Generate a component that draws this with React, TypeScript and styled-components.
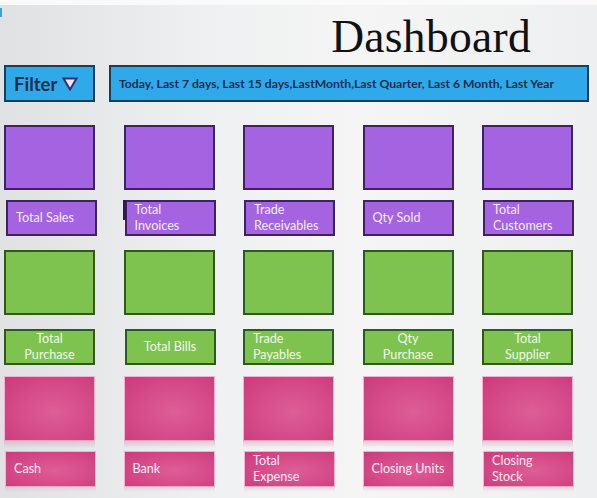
import styled, { createGlobalStyle, css } from "styled-components"

const GlobalStyle = createGlobalStyle`
  html, body {
    margin: 0;
    padding: 0;
  }
  body {
    font-family: Lato, "Open Sans", sans-serif;
  }
`

type Tone = "purple" | "green" | "pink"

const palette = {
  purple: { fill: "#a463e0", border: "#3d2361", text: "#f4ecfb" },
  green: { fill: "#7ec34f", border: "#2d5a1f", text: "#f1f8ea" },
  pink: { fill: "#d64787", border: "#f4b2cf", text: "#fdeaf3" },
}

const Page = styled.div`
  position: relative;
  width: 597px;
  height: 498px;
  overflow: hidden;
  box-sizing: border-box;
  border-top: 5px solid #fafafa;
  background: linear-gradient(90deg, #dfe1e3 0%, #eff0f1 35%, #f5f5f5 60%, #eeeff0 100%);
`

/* the little blue scrap at the top left */
const Scrap = styled.div`
  position: absolute;
  left: 0;
  top: 3px;
  width: 2px;
  height: 9px;
  background: #2fa6e6;
`

const TitleRow = styled.div`
  height: 60px;
  display: flex;
  justify-content: flex-end;
  padding-right: 66px;
`

const Title = styled.h1`
  margin: 9px 0 0;
  font-family: "Liberation Serif", "Times New Roman", serif;
  font-weight: 400;
  font-size: 45.5px;
  line-height: 45px;
  letter-spacing: 0.3px;
  color: #111;
`

const FilterRow = styled.div`
  display: flex;
  gap: 14px;
  padding-left: 4px;
  height: 37px;
`

const BlueBox = styled.div`
  box-sizing: border-box;
  height: 37px;
  background: #2fa9ea;
  border: 2px solid #1d3c5c;
  display: flex;
  align-items: center;
  color: #1d2f4d;
  font-weight: 700;
`

const FilterButton = styled(BlueBox)`
  width: 91px;
  padding-left: 8px;
  gap: 5px;
  font-size: 18.5px;
`

const Periods = styled(BlueBox)`
  width: 480px;
  padding-left: 8px;
  font-size: 12.2px;
`

const Tiles = styled.div`
  margin-top: 23px;
  padding-left: 4px;
  display: flex;
  flex-direction: column;
`

const Band = styled.div<{ $after: number; $gap: number }>`
  display: grid;
  grid-template-columns: repeat(5, 91px);
  column-gap: 28.5px;
  row-gap: ${(p) => p.$gap}px;
  margin-bottom: ${(p) => p.$after}px;
`

const Box = styled.div<{ $tone: Tone }>`
  box-sizing: border-box;
  height: 65px;
  background: ${(p) => palette[p.$tone].fill};
  border: 2px solid ${(p) => palette[p.$tone].border};
  ${(p) =>
    p.$tone === "pink" &&
    css`
      position: relative;
      border-width: 1px;
      background: radial-gradient(ellipse at 55% 55%, #dd5e97 0%, #d54a88 55%, #cb3a7a 100%);
      &::after {
        content: "";
        position: absolute;
        left: -1px;
        right: -1px;
        top: 100%;
        height: 8px;
        background: linear-gradient(180deg, rgba(214, 150, 180, 0.55), rgba(225, 215, 220, 0));
      }
    `}
`

const Label = styled.div<{ $tone: Tone; $center?: boolean; $nudge?: number; $notch?: boolean }>`
  position: relative;
  box-sizing: border-box;
  width: 91px;
  height: 36px;
  margin-left: ${(p) => p.$nudge ?? 0}px;
  padding: 0 ${(p) => (p.$center ? 4 : 8)}px;
  display: flex;
  flex-direction: column;
  justify-content: center;
  align-items: ${(p) => (p.$center ? "center" : "flex-start")};
  text-align: ${(p) => (p.$center ? "center" : "left")};
  background: ${(p) => palette[p.$tone].fill};
  border: 2px solid ${(p) => palette[p.$tone].border};
  color: ${(p) => palette[p.$tone].text};
  font-size: 12.6px;
  line-height: 16px;
  ${(p) =>
    p.$tone === "pink" &&
    css`
      border-width: 1px;
      background: radial-gradient(ellipse at 55% 55%, #dd5e97 0%, #d54a88 55%, #cb3a7a 100%);
      &::after {
        content: "";
        position: absolute;
        left: -1px;
        right: -1px;
        top: 100%;
        height: 6px;
        background: linear-gradient(180deg, rgba(214, 170, 190, 0.45), rgba(225, 215, 220, 0));
      }
    `}
  ${(p) =>
    p.$notch &&
    css`
      &::before {
        content: "";
        position: absolute;
        left: -4px;
        top: -2px;
        width: 3px;
        height: 20px;
        background: #2a1f4a;
      }
    `}
`

type Tile = { lines: string[]; center?: boolean; nudge?: number; notch?: boolean }

const bands: { tone: Tone; gap: number; after: number; tiles: Tile[] }[] = [
  {
    tone: "purple",
    gap: 10,
    after: 14,
    tiles: [
      { lines: ["Total Sales"], nudge: 2 },
      { lines: ["Total", "Invoices"], nudge: 1, notch: true },
      { lines: ["Trade", "Receivables"], nudge: 1 },
      { lines: ["Qty Sold"] },
      { lines: ["Total", "Customers"], nudge: 1 },
    ],
  },
  {
    tone: "green",
    gap: 14,
    after: 11,
    tiles: [
      { lines: ["Total", "Purchase"], center: true },
      { lines: ["Total Bills"], center: true, nudge: 1 },
      { lines: ["Trade", "Payables"] },
      { lines: ["Qty", "Purchase"], center: true },
      { lines: ["Total", "Supplier"], center: true },
    ],
  },
  {
    tone: "pink",
    gap: 10,
    after: 0,
    tiles: [
      { lines: ["Cash"], nudge: 1 },
      { lines: ["Bank"] },
      { lines: ["Total", "Expense"], nudge: 1 },
      { lines: ["Closing Units"] },
      { lines: ["Closing", "Stock"], nudge: 1 },
    ],
  },
]

const Triangle = () => (
  <svg width="16" height="14" viewBox="0 0 16 14">
    <path d="M1.5 1.5 H14.5 L8 12.5 Z" fill="#efe6fb" stroke="#3a2f6e" strokeWidth="2" strokeLinejoin="miter" />
  </svg>
)

export default function App() {
  return (
    <Page>
      <GlobalStyle />
      <Scrap />
      <TitleRow>
        <Title>Dashboard</Title>
      </TitleRow>
      <FilterRow>
        <FilterButton>
          Filter
          <Triangle />
        </FilterButton>
        <Periods>Today, Last 7 days, Last 15 days,LastMonth,Last Quarter, Last 6 Month, Last Year</Periods>
      </FilterRow>
      <Tiles>
        {bands.map((band) => (
          <Band key={band.tone} $gap={band.gap} $after={band.after}>
            {band.tiles.map((_, i) => (
              <Box key={"b" + i} $tone={band.tone} />
            ))}
            {band.tiles.map((t, i) => (
              <Label key={"l" + i} $tone={band.tone} $center={t.center} $nudge={t.nudge} $notch={t.notch}>
                {t.lines.map((line) => (
                  <span key={line}>{line}</span>
                ))}
              </Label>
            ))}
          </Band>
        ))}
      </Tiles>
    </Page>
  )
}
